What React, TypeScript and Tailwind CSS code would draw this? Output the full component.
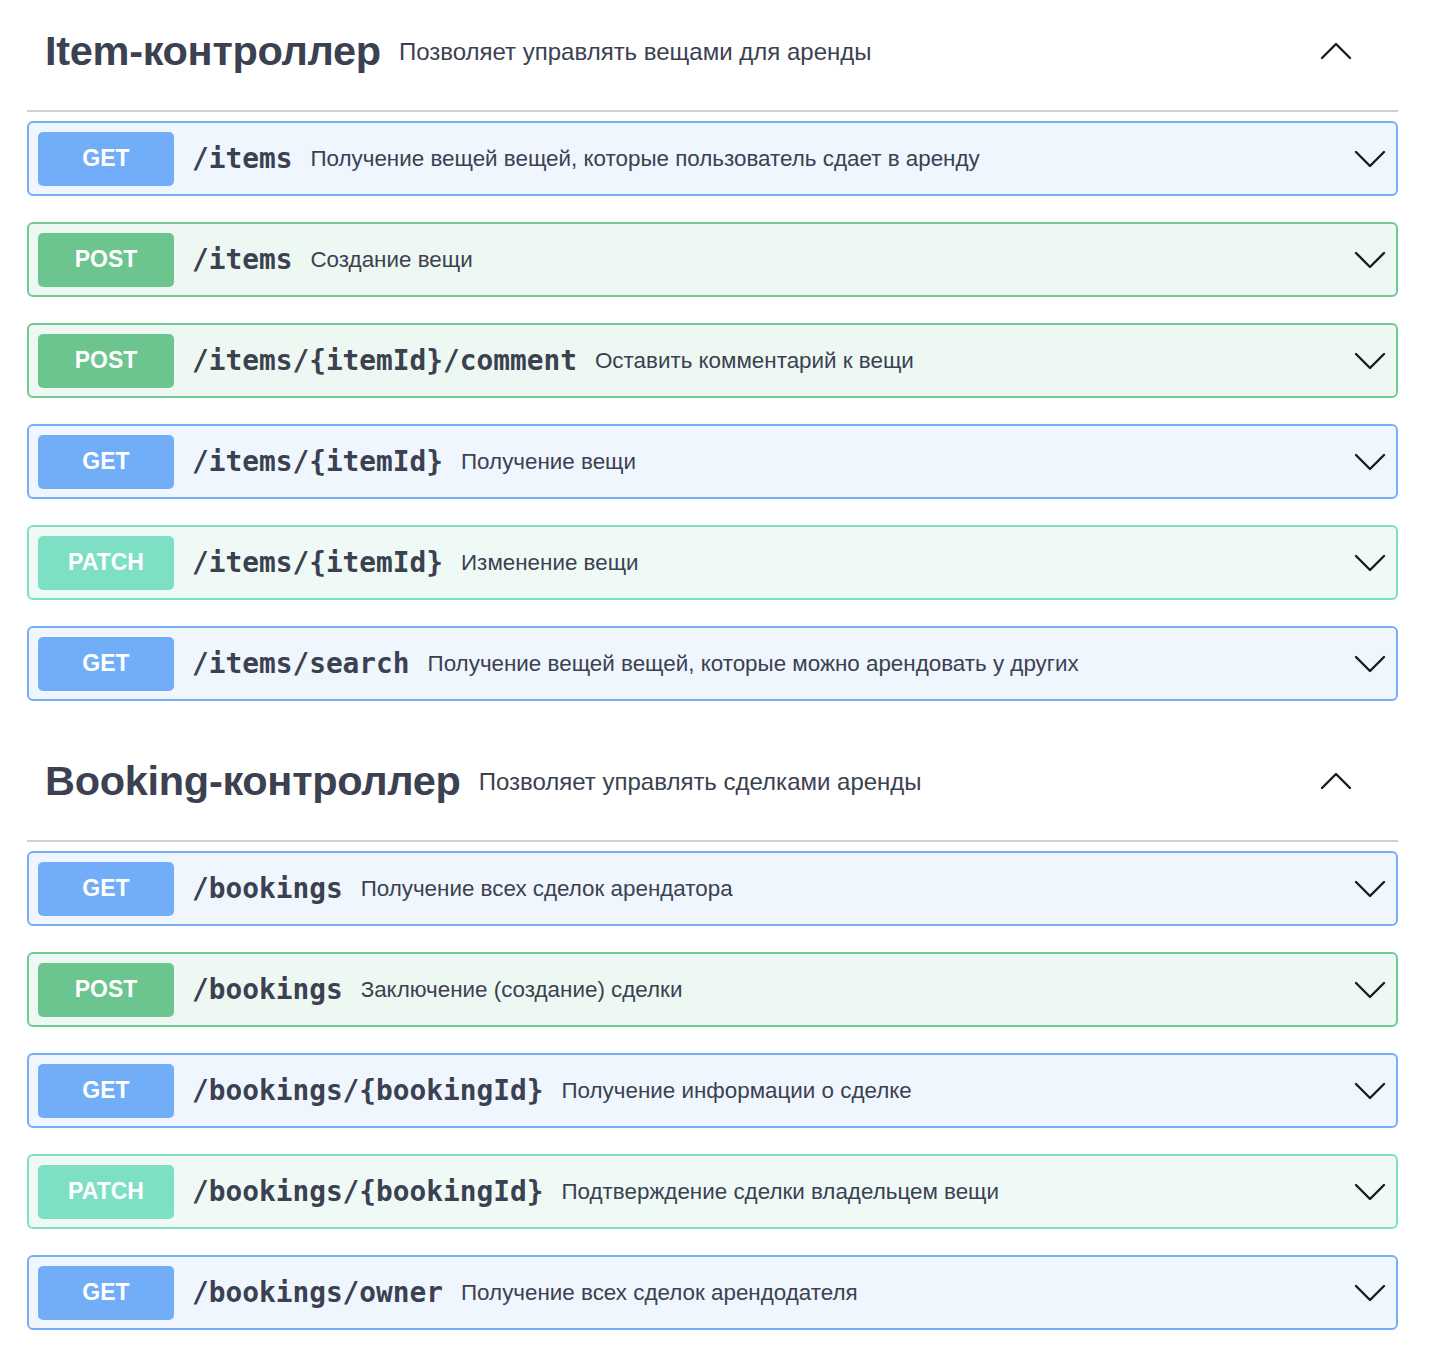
import React from "react";

type M = "GET" | "POST" | "PATCH";

const styles: Record<M, { box: string; badge: string }> = {
  GET: { box: "border-[#74aef6] bg-[#eff6fe]", badge: "bg-[#72adf7]" },
  POST: { box: "border-[#6fca95] bg-[#eef8f2]", badge: "bg-[#6cc48f]" },
  PATCH: { box: "border-[#7fdfc3] bg-[#effaf6]", badge: "bg-[#7ddfc4]" },
};

function Chevron({ up }: { up?: boolean }) {
  return (
    <svg width="32" height="20" viewBox="0 0 32 20" fill="none" stroke="#1a1a1a" strokeWidth="2.4" strokeLinecap="round" strokeLinejoin="round">
      {up ? <path d="M2 17 L16 3 L30 17" /> : <path d="M2 3 L16 17 L30 3" />}
    </svg>
  );
}

function Row({ method, path, desc }: { method: M; path: string; desc: string }) {
  const s = styles[method];
  return (
    <div className={`flex items-center h-[75px] border-2 rounded-[6px] px-[9px] ${s.box}`}>
      <div className={`w-[136px] h-[54px] rounded-[5px] flex items-center justify-center text-white font-bold text-[23px] ${s.badge}`} style={{ fontFamily: "Arial, 'Liberation Sans', sans-serif" }}>
        {method}
      </div>
      <div className="ml-[18px] font-bold text-[27.8px] text-[#3b4151]" style={{ fontFamily: "'DejaVu Sans Mono', monospace" }}>
        {path}
      </div>
      <div className="ml-[18px] text-[22.4px] text-[#3b4151]" style={{ fontFamily: "'Liberation Sans', Arial, sans-serif" }}>
        {desc}
      </div>
      <div className="ml-auto mr-[1px] flex items-center">
        <Chevron />
      </div>
    </div>
  );
}

function Section({ title, desc, rows }: { title: string; desc: string; rows: { method: M; path: string; desc: string }[] }) {
  return (
    <div>
      <div className="flex items-center h-[112px] pb-[8px] border-b-2 border-[#d0d0d2] pl-[18px] pr-[46px]" style={{ fontFamily: "'Liberation Sans', Arial, sans-serif" }}>
        <span className="font-bold text-[41.5px] text-[#3b4151] tracking-[-0.3px]">{title}</span>
        <span className="ml-[18px] text-[24px] text-[#3b4151] mt-[2px]">{desc}</span>
        <div className="ml-auto flex items-center">
          <Chevron up />
        </div>
      </div>
      <div className="flex flex-col gap-[26px] mt-[9px]">
        {rows.map((r, i) => (
          <Row key={i} {...r} />
        ))}
      </div>
    </div>
  );
}

export default function App() {
  return (
    <div className="bg-white min-h-[1372px] w-[1430px] px-[27px] pt-0">
      <div className="w-[1371px]">
        <Section
          title="Item-контроллер"
          desc="Позволяет управлять вещами для аренды"
          rows={[
            { method: "GET", path: "/items", desc: "Получение вещей вещей, которые пользователь сдает в аренду" },
            { method: "POST", path: "/items", desc: "Создание вещи" },
            { method: "POST", path: "/items/{itemId}/comment", desc: "Оставить комментарий к вещи" },
            { method: "GET", path: "/items/{itemId}", desc: "Получение вещи" },
            { method: "PATCH", path: "/items/{itemId}", desc: "Изменение вещи" },
            { method: "GET", path: "/items/search", desc: "Получение вещей вещей, которые можно арендовать у других" },
          ]}
        />
        <div className="h-[29px]" />
        <Section
          title="Booking-контроллер"
          desc="Позволяет управлять сделками аренды"
          rows={[
            { method: "GET", path: "/bookings", desc: "Получение всех сделок арендатора" },
            { method: "POST", path: "/bookings", desc: "Заключение (создание) сделки" },
            { method: "GET", path: "/bookings/{bookingId}", desc: "Получение информации о сделке" },
            { method: "PATCH", path: "/bookings/{bookingId}", desc: "Подтверждение сделки владельцем вещи" },
            { method: "GET", path: "/bookings/owner", desc: "Получение всех сделок арендодателя" },
          ]}
        />
      </div>
    </div>
  );
}
